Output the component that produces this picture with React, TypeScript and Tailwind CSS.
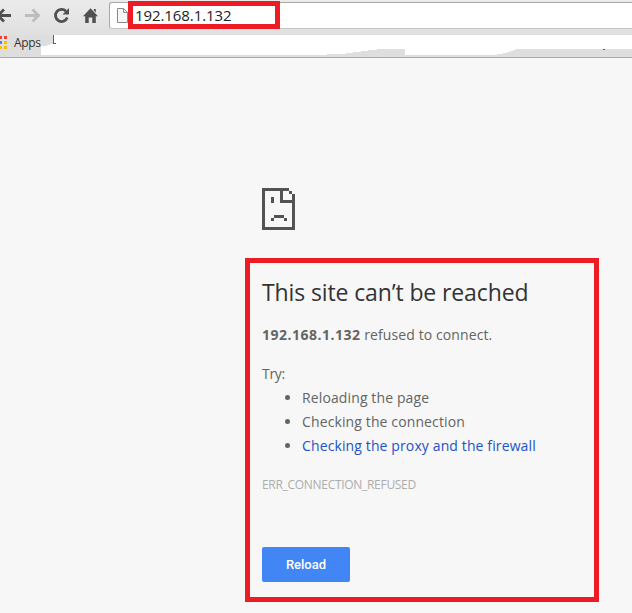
const tips = ["Reloading the page", "Checking the connection", "Checking the proxy and the firewall"];

function Toolbar() {
  return (
    <div className="flex h-[35px] items-start bg-linear-to-b from-[#ebebeb] to-[#e0e0e0]">
      <svg width="109" height="32" viewBox="0 0 109 32" className="shrink-0" fill="none">
        <path d="M-4 15.5H11M4 9.5L-2 15.5L4 21.5" stroke="#505050" strokeWidth="2.8" />
        <path d="M25 15.5H38M32.5 9.5L38.5 15.5L32.5 21.5" stroke="#bdbdbd" strokeWidth="2.8" />
        <path d="M66 11.2A6.1 6.1 0 1 0 67.3 17.6" stroke="#505050" strokeWidth="2.8" />
        <path d="M69 8V14.5H62.5Z" fill="#505050" />
        <path d="M83 16.2L90.5 8.3L98 16.2H95.8V23H92.3V17.5H88.7V23H85.2V16.2ZM93.8 9H95.8V12.6L93.8 10.6Z" fill="#505050" />
      </svg>
      <div className="mt-[2px] flex h-[27px] flex-1 rounded-l-[3px] border border-r-0 border-[#a8a8a8] border-b-[#c4c4c4] bg-white">
        <svg width="18" height="24" viewBox="0 0 18 24" className="shrink-0" fill="none">
          <path d="M7.5 5.5H13.5L17.5 9.5V19.5H7.5Z" fill="#f6f6f6" stroke="#8a8a8a" />
          <path d="M13.5 5.5V9.5H17.5" stroke="#8a8a8a" />
        </svg>
        <div className="-mt-[2px] flex h-[28px] w-[152px] items-center border-5 border-[#ed1c24] bg-white pl-[2px] text-[15px] tracking-[-0.08px] text-[#222]">
          192.168.1.132
        </div>
      </div>
    </div>
  );
}

function BookmarksBar() {
  return (
    <div className="relative flex h-[23px] border-b border-[#a8a8a8] bg-[#dedede]">
      <svg width="632" height="22" viewBox="0 0 632 22" className="absolute inset-0" shapeRendering="crispEdges">
        <path d="M54 0H632V14H517L511 16L506 18L494 20H405V14H377V15H368V16L353 17V18H346V19H327V20H41V11H46L54 8Z" fill="#fff" />
        <path d="M53 0H54V8H56V9H53Z" fill="#3465b8" />
        <path d="M603 14H605V15H603Z" fill="#5555a5" />
        <path d="M0 1H2V4H0ZM4 1H7V4H4Z" fill="#ea4335" />
        <path d="M0 6H2V9H0Z" fill="#4285f4" />
        <path d="M4 6H7V9H4ZM0 11H2V14H0ZM4 11H7V14H4Z" fill="#fbbc05" />
      </svg>
      <span className="relative ml-[14px] text-[12px] leading-[16px] tracking-[-0.35px] text-[#333]">Apps</span>
    </div>
  );
}

function SadPage() {
  return (
    <svg width="33" height="42" viewBox="0 0 33 42" className="ml-[262px]" fill="#535353" shapeRendering="crispEdges">
      <path d="M0 0H27V3H21V12H30V6H33V42H0ZM3 3V39H30V15H18V3Z" fillRule="evenodd" />
      <path d="M27 3H30V6H27ZM9 9H12V15H9ZM12 27H22V30H12ZM9 30H12V33H9ZM22 30H25V33H22Z" />
    </svg>
  );
}

export default function App() {
  return (
    <div className="h-[613px] w-[632px] overflow-hidden bg-[#f7f7f7] font-['Open_Sans','Noto_Sans',sans-serif]">
      <Toolbar />
      <BookmarksBar />
      <main className="pt-[130px]">
        <SadPage />
        <section className="mt-[28px] ml-[245px] h-[344px] w-[354px] border-5 border-[#ed1c24] px-3 pt-[14px] text-[14px] leading-6 whitespace-nowrap text-[#646464]">
          <h1 className="text-[23px] leading-[30px] tracking-[-0.12px] text-[#333]">This site can’t be reached</h1>
          <p className="mt-[16px] tracking-[0.1px]">
            <b className="tracking-[0.5px]">192.168.1.132</b> refused to connect.
          </p>
          <p className="mt-[15px] tracking-[-0.3px]">Try:</p>
          <ul className="list-disc pl-10 tracking-[0.12px]">
            {tips.map((tip, i) => (
              <li key={tip} className={i === 2 ? "marker:text-[#646464] text-[#2352c8]" : ""}>
                {tip}
              </li>
            ))}
          </ul>
          <p className="mt-[15px] text-[12px] tracking-[-0.3px] text-[#adadad]">ERR_CONNECTION_REFUSED</p>
          <button className="mt-[50px] flex h-[35px] w-[88px] items-center justify-center rounded-[2px] bg-[#4285f4] font-['Roboto',sans-serif] text-[13px] font-medium text-white">
            Reload
          </button>
        </section>
      </main>
    </div>
  );
}
